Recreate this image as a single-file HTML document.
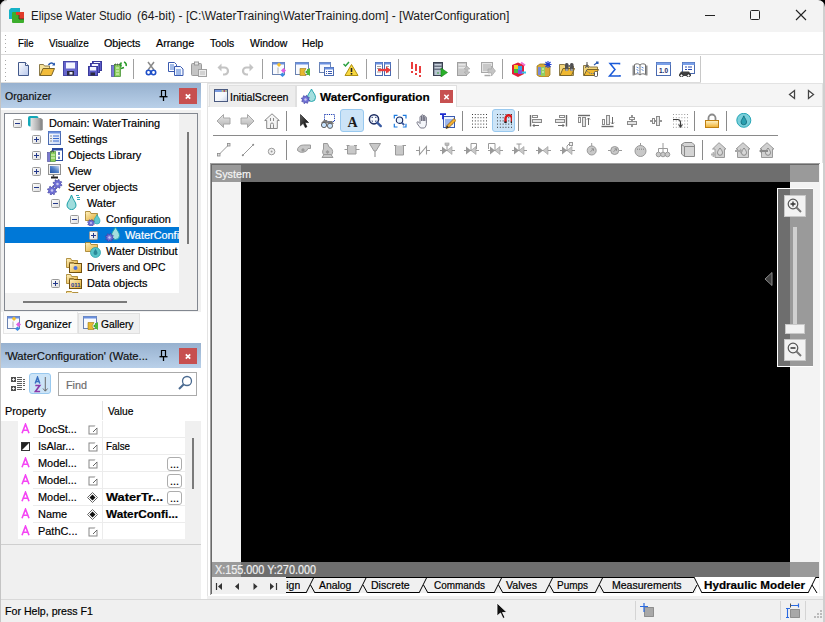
<!DOCTYPE html>
<html><head><meta charset="utf-8"><style>
html,body{margin:0;padding:0;}
body{width:825px;height:622px;position:relative;overflow:hidden;background:#f0f0f0;font-family:"Liberation Sans",sans-serif;}
body>div,body>svg,body>span{position:absolute;}
.t{white-space:pre;line-height:normal;-webkit-text-stroke:0.2px currentColor;}
</style></head><body>
<div style="left:0px;top:0px;width:825px;height:622px;background:#f0f0f0;"></div>
<div style="left:0px;top:0px;width:825px;height:32px;background:#f3f3f3;"></div>
<svg style="left:8px;top:7px" width="17" height="17" viewBox="0 0 17 17"><path d="M3 1h9v11H1V3z" fill="#16b2c6"/><rect x="4" y="5" width="12" height="11" rx="1" fill="#3cae2c"/><path d="M8 5h8v7h-5v-4H8z" fill="#e03a2a"/><path d="M11 8v4h5" fill="none" stroke="#2a2a2a" stroke-width=".7"/></svg>
<span class="t" style="left:30.5px;top:9.14px;font-size:12px;font-weight:400;color:#1a1a1a;transform:scaleX(0.9577);transform-origin:0 0;-webkit-text-stroke:0;">Elipse Water Studio</span>
<span class="t" style="left:137px;top:9.14px;font-size:12px;font-weight:400;color:#1a1a1a;transform:scaleX(1.0068);transform-origin:0 0;-webkit-text-stroke:0;">(64-bit) - [C:\WaterTraining\WaterTraining.dom] - [WaterConfiguration]</span>
<div style="left:705px;top:15px;width:10px;height:1px;background:#222;"></div>
<div style="left:750px;top:10px;width:10px;height:10px;border:1px solid #222;border-radius:1.5px;box-sizing:border-box;"></div>
<svg style="left:795px;top:9px" width="12" height="12" viewBox="0 0 12 12"><path d="M1 1l10 10M11 1L1 11" stroke="#222" stroke-width="1.1"/></svg>
<div style="left:1px;top:32px;width:822px;height:22px;background:#fff;"></div>
<div style="left:5px;top:35px;width:1px;height:1px;background:#aaa;"></div>
<div style="left:5px;top:39px;width:1px;height:1px;background:#aaa;"></div>
<div style="left:5px;top:43px;width:1px;height:1px;background:#aaa;"></div>
<div style="left:5px;top:47px;width:1px;height:1px;background:#aaa;"></div>
<div style="left:5px;top:51px;width:1px;height:1px;background:#aaa;"></div>
<span class="t" style="left:17.5px;top:37.05px;font-size:11px;font-weight:400;color:#000;transform:scaleX(0.8744);transform-origin:0 0;">File</span>
<span class="t" style="left:48.5px;top:37.05px;font-size:11px;font-weight:400;color:#000;transform:scaleX(0.9059);transform-origin:0 0;">Visualize</span>
<span class="t" style="left:103.6px;top:37.05px;font-size:11px;font-weight:400;color:#000;transform:scaleX(0.9761);transform-origin:0 0;">Objects</span>
<span class="t" style="left:155.8px;top:37.05px;font-size:11px;font-weight:400;color:#000;transform:scaleX(0.9761);transform-origin:0 0;">Arrange</span>
<span class="t" style="left:209.7px;top:37.05px;font-size:11px;font-weight:400;color:#000;transform:scaleX(0.9463);transform-origin:0 0;">Tools</span>
<span class="t" style="left:249.7px;top:37.05px;font-size:11px;font-weight:400;color:#000;transform:scaleX(0.9534);transform-origin:0 0;">Window</span>
<span class="t" style="left:302px;top:37.05px;font-size:11px;font-weight:400;color:#000;transform:scaleX(0.9415);transform-origin:0 0;">Help</span>
<div style="left:1px;top:54px;width:822px;height:1px;background:#d9d9d9;"></div>
<div style="left:1px;top:55px;width:822px;height:28px;background:#fff;"></div>
<div style="left:5px;top:60px;width:1px;height:1px;background:#aaa;"></div>
<div style="left:5px;top:64px;width:1px;height:1px;background:#aaa;"></div>
<div style="left:5px;top:68px;width:1px;height:1px;background:#aaa;"></div>
<div style="left:5px;top:72px;width:1px;height:1px;background:#aaa;"></div>
<div style="left:5px;top:76px;width:1px;height:1px;background:#aaa;"></div>
<div style="left:5px;top:80px;width:1px;height:1px;background:#aaa;"></div>
<div style="left:1px;top:82px;width:700px;height:1px;background:#dcdcdc;"></div>
<div style="left:700px;top:56px;width:1px;height:26px;background:#c8c8c8;"></div>
<svg style="left:17px;top:61px" width="16" height="16" viewBox="0 0 16 16"><defs><linearGradient id="gnew" x1="0" y1="0" x2="1" y2="1"><stop offset="0" stop-color="#ffffff"/><stop offset="1" stop-color="#b8c8ec"/></linearGradient></defs><path d="M1.5 1.5h7l3 3v10h-10z" fill="url(#gnew)" stroke="#42588a"/><path d="M8.5 1.5v3h3" fill="#fff" stroke="#42588a"/></svg>
<svg style="left:39px;top:61px" width="16" height="16" viewBox="0 0 16 16"><path d="M.5 3.5h4l1 1.5h5v9.5H.5z" fill="#f6e29a" stroke="#8c7a48"/><path d="M1 14.5l3-7h11.5l-3 7z" fill="#f2bc3a" stroke="#7a6428"/><path d="M9.5 4C11 1.5 13.5 1.5 15 3.5" fill="none" stroke="#2a5ab0" stroke-width="1.5"/><path d="M13 4.5h3v-3z" fill="#2a5ab0"/></svg>
<svg style="left:63px;top:61px" width="16" height="16" viewBox="0 0 16 16"><rect x=".5" y=".5" width="14" height="14" fill="#6666cc" stroke="#4646a6"/><rect x="3" y="1.5" width="9" height="6" fill="#f4f6ff"/><rect x="4" y="10" width="7" height="4.5" fill="#2a2a40"/><rect x="6.5" y="11" width="3" height="2.5" fill="#e8e8f8"/></svg>
<svg style="left:87px;top:61px" width="16" height="16" viewBox="0 0 16 16"><rect x="5.5" y=".5" width="9" height="9" fill="#5c5cc8" stroke="#3a3a9a"/><rect x="7" y="1" width="6" height="2" fill="#f4f6ff"/><rect x="3.5" y="2.5" width="9" height="9" fill="#5c5cc8" stroke="#3a3a9a"/><rect x="5" y="3" width="6" height="2" fill="#f4f6ff"/><rect x="1.5" y="5.5" width="9" height="9" fill="#5c5cc8" stroke="#3a3a9a"/><rect x="3" y="6" width="6" height="3.5" fill="#f4f6ff"/><rect x="3.5" y="11.5" width="4.5" height="3" fill="#2a2a40"/></svg>
<svg style="left:111px;top:61px" width="16" height="16" viewBox="0 0 16 16"><rect x=".5" y="4.5" width="3" height="11" fill="#7a7ad8" stroke="#4a4a9a" stroke-width=".7"/><rect x="3.5" y="3.5" width="6" height="12" fill="#90d060" stroke="#3a8a2a" stroke-width=".7"/><path d="M5 7h3M5 10h3M5 13h3" stroke="#e6f8d6"/><path d="M4.5 2.5v2M6.5 2.5v2M8.5 2.5v2" stroke="#555" stroke-width=".8"/><path d="M10.5 5.5a3 3 0 0 1 0-4M13 1a3 3 0 0 1 2 4" fill="none" stroke="#2a9a2a" stroke-width="1.6"/><path d="M10 7.5l3-1" stroke="#2a9a2a" stroke-width="1.4"/></svg>
<div style="left:133px;top:59px;width:1px;height:20px;background:#a0a0a0;"></div>
<svg style="left:143px;top:61px" width="16" height="16" viewBox="0 0 16 16"><path d="M5 9L11 1M11 9L5 1" stroke="#8a8a8a" stroke-width="1.5"/><circle cx="5.5" cy="11.5" r="2.2" fill="none" stroke="#2050c8" stroke-width="1.6"/><circle cx="10.5" cy="11.5" r="2.2" fill="none" stroke="#2050c8" stroke-width="1.6"/></svg>
<svg style="left:168px;top:61px" width="16" height="16" viewBox="0 0 16 16"><path d="M.5 1.5h6l2 2v7h-8z" fill="#fff" stroke="#3a5ab0"/><path d="M2 4h4M2 6h4M2 8h4" stroke="#4a7ad0"/><path d="M6.5 5.5h6l2.5 2.5v6.5h-8.5z" fill="#f4f8ff" stroke="#3a5ab0"/><path d="M8 9h5M8 11h5M8 13h5" stroke="#4a7ad0"/></svg>
<svg style="left:191px;top:61px" width="16" height="16" viewBox="0 0 16 16"><rect x=".5" y="2.5" width="10" height="12" rx="1" fill="#c4c4c4" stroke="#9a9a9a"/><rect x="3.5" y="1" width="4" height="3" fill="#e8e8e8" stroke="#9a9a9a"/><rect x="7.5" y="8.5" width="8" height="7" fill="#ececec" stroke="#a0a0a0"/><path d="M9 11h5M9 13h5" stroke="#b8b8b8"/></svg>
<svg style="left:216px;top:61px" width="16" height="16" viewBox="0 0 16 16"><path d="M4.5 6.5h4a3.5 3.5 0 0 1 0 7H7" fill="none" stroke="#c4c4c4" stroke-width="2.2"/><path d="M1.5 6.5l4-4v8z" fill="#c4c4c4"/></svg>
<svg style="left:239px;top:61px" width="16" height="16" viewBox="0 0 16 16"><path d="M11.5 6.5h-4a3.5 3.5 0 0 0 0 7H9" fill="none" stroke="#c4c4c4" stroke-width="2.2"/><path d="M14.5 6.5l-4-4v8z" fill="#c4c4c4"/></svg>
<div style="left:262px;top:59px;width:1px;height:20px;background:#a0a0a0;"></div>
<svg style="left:271px;top:61px" width="16" height="16" viewBox="0 0 16 16"><rect x="1.5" y="1.5" width="12" height="12" fill="#f8faff" stroke="#6a82b0"/><rect x="1.5" y="1.5" width="12" height="2" fill="#6a90e0"/><path d="M7 6.5v6" stroke="#b0b0b0"/><path d="M8 1.5l2.3 2.3L8 6.1 5.7 3.8z" fill="#f4c030"/><path d="M12.5 7l2.5 2.5-2.5 2.5L10 9.5z" fill="#e060e0"/><path d="M11.5 11.5l2.5 2.2-2.5 2.2L9 13.7z" fill="#3a8ae0"/></svg>
<svg style="left:295px;top:61px" width="16" height="16" viewBox="0 0 16 16"><rect x=".5" y="1.5" width="13" height="12" fill="#f8faff" stroke="#6a82b0"/><rect x=".5" y="1.5" width="13" height="2" fill="#6a90e0"/><path d="M5 7.5h6l-2 3.5 2 3.5H5z" fill="#e8b830" stroke="#a07a10" stroke-width=".6"/><path d="M15 7v8l-5-4z" fill="#3aa02a"/><rect x="12" y="8" width="3" height="6" fill="#50b83a"/></svg>
<svg style="left:319px;top:61px" width="16" height="16" viewBox="0 0 16 16"><rect x=".5" y="1.5" width="11" height="10" fill="#f8faff" stroke="#6a82b0"/><rect x=".5" y="1.5" width="11" height="2" fill="#6a90e0"/><rect x="5.5" y="6.5" width="9" height="8" fill="#fff" stroke="#4a6ab0"/><rect x="5.5" y="6.5" width="9" height="2" fill="#6a90e0"/><path d="M7 10.5h1M7 12.5h1M9 10.5h4M9 12.5h4" stroke="#3a5ab0"/></svg>
<svg style="left:343px;top:61px" width="16" height="16" viewBox="0 0 16 16"><path d="M8.5 3.5l6.5 11H2z" fill="#f8d840" stroke="#b09010" stroke-linejoin="round"/><path d="M8.5 7v4" stroke="#222" stroke-width="1.6"/><path d="M8.5 12v1.6" stroke="#222" stroke-width="1.6"/><path d="M.5 3l2 2 3.5-4" fill="none" stroke="#2aa040" stroke-width="1.5"/></svg>
<div style="left:366px;top:59px;width:1px;height:20px;background:#a0a0a0;"></div>
<svg style="left:375px;top:61px" width="16" height="16" viewBox="0 0 16 16"><rect x=".5" y="1.5" width="7" height="13" fill="#fff" stroke="#4a6ab0"/><rect x=".5" y="1.5" width="7" height="2" fill="#6a90e0"/><rect x="9.5" y="1.5" width="6" height="13" fill="#fff" stroke="#4a6ab0"/><rect x="9.5" y="1.5" width="6" height="2" fill="#6a90e0"/><path d="M2 5.5h4M2 7.5h4M2 11h4M11 5.5h3M11 11h3" stroke="#a0a0a0"/><path d="M3 9h8" stroke="#e83a3a" stroke-width="2.4"/><path d="M11 5.5l5 3.5-5 3.5z" fill="#e83a3a"/></svg>
<div style="left:398px;top:59px;width:1px;height:20px;background:#a0a0a0;"></div>
<svg style="left:408px;top:61px" width="16" height="16" viewBox="0 0 16 16"><path d="M4 1v7M8 3v7M12 5v7" stroke="#e82828" stroke-width="1.8"/><path d="M4 10v2M8 12v2M12 14v2" stroke="#e82828" stroke-width="1.8"/></svg>
<svg style="left:432px;top:61px" width="16" height="16" viewBox="0 0 16 16"><rect x="1.5" y="1.5" width="9" height="13" fill="#6a7282" stroke="#3a4050"/><rect x="2.5" y="3" width="7" height="1.5" fill="#c8d0dc"/><rect x="2.5" y="6" width="7" height="1.5" fill="#c8d0dc"/><rect x="2.5" y="9" width="7" height="5" fill="#b8c4d0"/><circle cx="6" cy="12" r=".8" fill="#2a9a2a"/><path d="M9 7l6.5 4.5L9 16z" fill="#28b028" stroke="#1a801a" stroke-width=".6"/></svg>
<svg style="left:456px;top:61px" width="16" height="16" viewBox="0 0 16 16"><rect x="1.5" y="1.5" width="9" height="13" fill="#c8c8c8" stroke="#a0a0a0"/><rect x="2.5" y="3" width="7" height="1.5" fill="#e8e8e8"/><rect x="2.5" y="6" width="7" height="1.5" fill="#e8e8e8"/><path d="M11 5l3 3h-2v3h2l-3 3-3-3h2V8H8z" fill="#c0c0c0" stroke="#a8a8a8" stroke-width=".6"/></svg>
<svg style="left:480px;top:61px" width="16" height="16" viewBox="0 0 16 16"><rect x="1.5" y="1.5" width="11" height="10" fill="#e4e4e4" stroke="#a8a8a8"/><rect x="3" y="3" width="8" height="7" fill="#c8c8c8"/><path d="M4.5 14.5h6" stroke="#a8a8a8" stroke-width="1.5"/><path d="M8 8h3.5V5l4 5-4 5v-3H8z" fill="#c4c4c4" stroke="#a0a0a0" stroke-width=".6"/></svg>
<div style="left:502px;top:59px;width:1px;height:20px;background:#a0a0a0;"></div>
<svg style="left:511px;top:61px" width="16" height="16" viewBox="0 0 16 16"><path d="M1 4l6-2.5 6 2.5v9l-6 3-6-3z" fill="#e02038"/><rect x="3" y="4" width="4" height="4" fill="#f0d020"/><rect x="7" y="5" width="4" height="4" fill="#30a8e8"/><rect x="3" y="8" width="4" height="4" fill="#40c040"/><rect x="7" y="9" width="4" height="4" fill="#8050e0"/><path d="M10 1.5l4 3" stroke="#f070d0" stroke-width="2"/><path d="M11 11.5h4" stroke="#30c8e8" stroke-width="2"/></svg>
<svg style="left:536px;top:61px" width="16" height="16" viewBox="0 0 16 16"><path d="M1 5l3-2h8l2 2v9l-2 2H4l-3-2z" fill="#d8a838" stroke="#8a6a10" stroke-width=".7"/><rect x="2" y="6" width="3" height="8" fill="#7a8ad8"/><rect x="5" y="6" width="4" height="9" fill="#90d060"/><path d="M6 8h2M6 11h2" stroke="#e8f8d8"/><path d="M9.5 1l5 5M14.5 1l-5 5M12 0v7M8.5 3.5h7" stroke="#1a3ad0" stroke-width="1.1"/></svg>
<svg style="left:559px;top:61px" width="16" height="16" viewBox="0 0 16 16"><path d="M.5 3.5h5l1 1.5h8v9.5H.5z" fill="#f4d67a" stroke="#8c7a48"/><path d="M1 14.5l3-7h11.5l-3 7z" fill="#f0b830" stroke="#7a6428"/><rect x="6" y="2" width="3.5" height="8" rx="1.5" fill="#505050"/><rect x="11" y="2" width="3.5" height="8" rx="1.5" fill="#505050"/><rect x="9" y="4" width="2.5" height="2" fill="#707070"/><circle cx="7.7" cy="9" r="1.3" fill="#a0a0a0"/><circle cx="12.7" cy="9" r="1.3" fill="#a0a0a0"/></svg>
<svg style="left:583px;top:61px" width="16" height="16" viewBox="0 0 16 16"><path d="M.5 4.5h5l1 1.5h8v8.5H.5z" fill="#f4d67a" stroke="#8c7a48"/><path d="M1 14.5l3-6h11.5l-3 6z" fill="#f0b830" stroke="#7a6428"/><path d="M4 1v5M2.5 7l1.5-4 1.5 4" fill="none" stroke="#606060" stroke-width="1.1"/><path d="M3 9q4 5 9 3" fill="none" stroke="#2a5ab0" stroke-dasharray="1 1"/><path d="M11 4l4-3M13 1h2v2" stroke="#2a5ab0" stroke-width="1.1" fill="none"/><rect x="11.5" y="10.5" width="3" height="5" rx="1" fill="#fff" stroke="#555"/></svg>
<svg style="left:607px;top:61px" width="16" height="16" viewBox="0 0 16 16"><path d="M12.5 3.5V2.5H3l5 6-5.5 6.5h10.5V14" fill="none" stroke="#1a5ad8" stroke-width="1.5" stroke-linejoin="miter"/></svg>
<svg style="left:632px;top:61px" width="16" height="16" viewBox="0 0 16 16"><path d="M.5 4.5h2v10h-2zM13.5 4.5h2v10h-2z" fill="#909090"/><path d="M2.5 3.5c2-1 4-1 5.5.5 1.5-1.5 3.5-1.5 5.5-.5v10c-2-1-4-1-5.5.5-1.5-1.5-3.5-1.5-5.5-.5z" fill="#fff" stroke="#707070"/><path d="M8 4v10" stroke="#707070"/><path d="M4.5 6l2 1M4.5 8.5l2 1M9.5 6l2 1M9.5 8.5l2 1M5 11l1.5 1" stroke="#5a8ad8"/></svg>
<svg style="left:656px;top:61px" width="16" height="16" viewBox="0 0 16 16"><rect x=".5" y="1.5" width="14" height="13" fill="#fff" stroke="#4a6ab0"/><rect x=".5" y="1.5" width="14" height="2.5" fill="#7aa0e8"/><text x="7.5" y="12.3" font-size="6.5" font-family="Liberation Sans" font-weight="700" text-anchor="middle" fill="#1a2a6a">1.0</text></svg>
<svg style="left:679px;top:61px" width="16" height="16" viewBox="0 0 16 16"><rect x="3.5" y="1.5" width="12" height="11" fill="#fff" stroke="#4a6ab0"/><rect x="3.5" y="1.5" width="12" height="2.5" fill="#7aa0e8"/><path d="M6 6h2M9 6h4M6 8.5h2M9 8.5h4" stroke="#2a4ab0"/><path d="M0 13.5l2-3h8l2 3v1.5H0z" fill="#404040"/><circle cx="2.5" cy="14.5" r="1.6" fill="#fff" stroke="#222"/><circle cx="9.5" cy="14.5" r="1.6" fill="#fff" stroke="#222"/></svg>
<div style="left:0px;top:83px;width:207px;height:516px;background:#fff;"></div>
<div style="left:1px;top:83px;width:200px;height:25px;background:linear-gradient(#97b1cf,#b9d0e9);"></div>
<span class="t" style="left:5px;top:89.59px;font-size:11.5px;font-weight:400;color:#111;transform:scaleX(0.9169);transform-origin:0 0;">Organizer</span>
<svg style="left:159px;top:90px" width="10" height="12" viewBox="0 0 10 12"><path d="M2.5 .5h4v6h-4z" fill="none" stroke="#000" stroke-width="1.2"/><path d="M.5 6.7h8" stroke="#000" stroke-width="1.3"/><path d="M4.5 7v4" stroke="#000" stroke-width="1.3"/></svg>
<div style="left:179px;top:88px;width:18px;height:16px;background:#c75050;"></div>
<svg style="left:182px;top:90px" width="12" height="12" viewBox="0 0 12 12"><path d="M3.8 4.3l4.4 4.4M8.2 4.3l-4.4 4.4" stroke="#fff" stroke-width="1.7"/></svg>
<div style="left:1px;top:110px;width:200px;height:202px;background:#f0f0f0;"></div>
<div style="left:4px;top:113px;width:194px;height:198px;background:#f0f0f0;border:1px solid #828790;box-sizing:border-box;"></div>
<div style="left:5px;top:114px;width:174px;height:179px;background:#fff;"></div>
<div style="left:187px;top:132px;width:2px;height:112px;background:#7a7a7a;"></div>
<div style="left:23px;top:301px;width:104px;height:2px;background:#7a7a7a;"></div>
<svg style="left:13px;top:119px" width="9" height="9" viewBox="0 0 9 9"><defs><linearGradient id="eg" x1="0" y1="0" x2="1" y2="1"><stop offset="0" stop-color="#fff"/><stop offset="1" stop-color="#dcdcdc"/></linearGradient></defs><rect x=".5" y=".5" width="8" height="8" rx="1" fill="url(#eg)" stroke="#9a9a9a"/><path d="M2 4.5h5" stroke="#23388a"/></svg>
<svg style="left:28px;top:115px" width="16" height="16" viewBox="0 0 16 16"><defs><linearGradient id="dg" x1="0" x2="1"><stop offset="0" stop-color="#e6e6e6"/><stop offset=".6" stop-color="#b0b0b0"/><stop offset="1" stop-color="#808080"/></linearGradient></defs><rect x="0" y="1" width="10.5" height="10.5" rx="2" fill="#14a8b8"/><path d="M2.5 3h10l2 1.5V15l-2 .5h-10z" fill="url(#dg)"/><path d="M12.5 3l2 1.5V15l-2 .5z" fill="#8a8a8a"/></svg>
<span class="t" style="left:48.7px;top:117.05px;font-size:11px;font-weight:400;color:#000;transform:scaleX(0.9900);transform-origin:0 0;">Domain: WaterTraining</span>
<svg style="left:32px;top:135px" width="9" height="9" viewBox="0 0 9 9"><defs><linearGradient id="eg" x1="0" y1="0" x2="1" y2="1"><stop offset="0" stop-color="#fff"/><stop offset="1" stop-color="#dcdcdc"/></linearGradient></defs><rect x=".5" y=".5" width="8" height="8" rx="1" fill="url(#eg)" stroke="#9a9a9a"/><path d="M2 4.5h5" stroke="#23388a"/><path d="M4.5 2v5" stroke="#23388a"/></svg>
<svg style="left:47px;top:131px" width="16" height="16" viewBox="0 0 16 16"><defs><linearGradient id="sg" x1="0" y1="0" x2="1" y2="1"><stop offset="0" stop-color="#ffffff"/><stop offset="1" stop-color="#c8d8f4"/></linearGradient></defs><rect x="1.5" y=".5" width="12" height="13" fill="url(#sg)" stroke="#4a6ab0"/><rect x="1.5" y=".5" width="12" height="2" fill="#6a90e0"/><path d="M3 5h2M3 7.5h2M3 10h2" stroke="#909090" stroke-width="1.2"/><path d="M6 5h6M6 7.5h6M6 10h6" stroke="#3a6ad0" stroke-width="1.2"/></svg>
<span class="t" style="left:67.7px;top:133.04px;font-size:11px;font-weight:400;color:#000;transform:scaleX(0.9900);transform-origin:0 0;">Settings</span>
<svg style="left:32px;top:151px" width="9" height="9" viewBox="0 0 9 9"><defs><linearGradient id="eg" x1="0" y1="0" x2="1" y2="1"><stop offset="0" stop-color="#fff"/><stop offset="1" stop-color="#dcdcdc"/></linearGradient></defs><rect x=".5" y=".5" width="8" height="8" rx="1" fill="url(#eg)" stroke="#9a9a9a"/><path d="M2 4.5h5" stroke="#23388a"/><path d="M4.5 2v5" stroke="#23388a"/></svg>
<svg style="left:47px;top:147px" width="16" height="16" viewBox="0 0 16 16"><rect x="5.5" y="1.5" width="10" height="12" fill="#fff" stroke="#2a4aa0"/><rect x="5.5" y="1.5" width="10" height="2" fill="#2a4aa0"/><path d="M12 5v3M12 9.5v2.5" stroke="#2a4aa0" stroke-width="1.4"/><rect x="0.5" y="5.5" width="3" height="9" fill="#7a7ad0" stroke="#4a4a9a" stroke-width=".6"/><rect x="3.5" y="4.5" width="5" height="10" fill="#8cd05a" stroke="#3a8a2a" stroke-width=".6"/><path d="M4.5 3.5v2M6.5 3.5v2" stroke="#555"/><path d="M4 8h4M4 11h4" stroke="#e8f8d0"/></svg>
<span class="t" style="left:67.7px;top:149.04px;font-size:11px;font-weight:400;color:#000;transform:scaleX(0.9900);transform-origin:0 0;">Objects Library</span>
<svg style="left:32px;top:167px" width="9" height="9" viewBox="0 0 9 9"><defs><linearGradient id="eg" x1="0" y1="0" x2="1" y2="1"><stop offset="0" stop-color="#fff"/><stop offset="1" stop-color="#dcdcdc"/></linearGradient></defs><rect x=".5" y=".5" width="8" height="8" rx="1" fill="url(#eg)" stroke="#9a9a9a"/><path d="M2 4.5h5" stroke="#23388a"/><path d="M4.5 2v5" stroke="#23388a"/></svg>
<svg style="left:47px;top:163px" width="16" height="16" viewBox="0 0 16 16"><rect x="1.5" y="1.5" width="12" height="10" fill="#f0f0f0" stroke="#909090"/><defs><linearGradient id="vg" x1="0" y1="1" x2="1" y2="0"><stop offset="0" stop-color="#2050a0"/><stop offset=".5" stop-color="#5080c8"/><stop offset="1" stop-color="#c8d8f0"/></linearGradient></defs><rect x="3" y="3" width="9" height="7" fill="url(#vg)"/><path d="M4 14.5h7" stroke="#222" stroke-width="2"/><path d="M6.5 12v2" stroke="#555" stroke-width="1.5"/></svg>
<span class="t" style="left:67.7px;top:165.04px;font-size:11px;font-weight:400;color:#000;transform:scaleX(0.9900);transform-origin:0 0;">View</span>
<svg style="left:32px;top:183px" width="9" height="9" viewBox="0 0 9 9"><defs><linearGradient id="eg" x1="0" y1="0" x2="1" y2="1"><stop offset="0" stop-color="#fff"/><stop offset="1" stop-color="#dcdcdc"/></linearGradient></defs><rect x=".5" y=".5" width="8" height="8" rx="1" fill="url(#eg)" stroke="#9a9a9a"/><path d="M2 4.5h5" stroke="#23388a"/></svg>
<svg style="left:47px;top:179px" width="16" height="16" viewBox="0 0 16 16"><polygon points="10.50,1.80 11.40,0.49 12.26,0.75 12.28,2.34 12.76,2.74 14.32,2.44 14.75,3.24 13.64,4.38 13.70,5.00 15.01,5.90 14.75,6.76 13.16,6.78 12.76,7.26 13.06,8.82 12.26,9.25 11.12,8.14 10.50,8.20 9.60,9.51 8.74,9.25 8.72,7.66 8.24,7.26 6.68,7.56 6.25,6.76 7.36,5.62 7.30,5.00 5.99,4.10 6.25,3.24 7.84,3.22 8.24,2.74 7.94,1.18 8.74,0.75 9.88,1.86" fill="#6f6fd6" stroke="#3a3a9a" stroke-width=".6"/><circle cx="10.5" cy="5" r="1.28" fill="#c8c8f0"/><polygon points="5.00,8.30 5.90,6.99 6.76,7.25 6.78,8.84 7.26,9.24 8.82,8.94 9.25,9.74 8.14,10.88 8.20,11.50 9.51,12.40 9.25,13.26 7.66,13.28 7.26,13.76 7.56,15.32 6.76,15.75 5.62,14.64 5.00,14.70 4.10,16.01 3.24,15.75 3.22,14.16 2.74,13.76 1.18,14.06 0.75,13.26 1.86,12.12 1.80,11.50 0.49,10.60 0.75,9.74 2.34,9.72 2.74,9.24 2.44,7.68 3.24,7.25 4.38,8.36" fill="#6f6fd6" stroke="#3a3a9a" stroke-width=".6"/><circle cx="5" cy="11.5" r="1.28" fill="#c8c8f0"/></svg>
<span class="t" style="left:67.7px;top:181.04px;font-size:11px;font-weight:400;color:#000;transform:scaleX(0.9900);transform-origin:0 0;">Server objects</span>
<svg style="left:51px;top:199px" width="9" height="9" viewBox="0 0 9 9"><defs><linearGradient id="eg" x1="0" y1="0" x2="1" y2="1"><stop offset="0" stop-color="#fff"/><stop offset="1" stop-color="#dcdcdc"/></linearGradient></defs><rect x=".5" y=".5" width="8" height="8" rx="1" fill="url(#eg)" stroke="#9a9a9a"/><path d="M2 4.5h5" stroke="#23388a"/></svg>
<svg style="left:66px;top:194px" width="16" height="16" viewBox="0 0 16 16"><path d="M5.5 1C7.0 5.8999999999999995 10.0 8.0 10.0 11.08A4.5 4.5 0 0 1 1.0 11.08C1.0 8.0 4.0 5.8999999999999995 5.5 1z" fill="#9fdcdc" stroke="#1aa0a8" stroke-width="1"/><path d="M10 1.5h3M11 3.5h3M11 5.5h3" stroke="#30a8b8" stroke-width="1"/></svg>
<span class="t" style="left:86.7px;top:197.04px;font-size:11px;font-weight:400;color:#000;transform:scaleX(0.9900);transform-origin:0 0;">Water</span>
<svg style="left:70px;top:215px" width="9" height="9" viewBox="0 0 9 9"><defs><linearGradient id="eg" x1="0" y1="0" x2="1" y2="1"><stop offset="0" stop-color="#fff"/><stop offset="1" stop-color="#dcdcdc"/></linearGradient></defs><rect x=".5" y=".5" width="8" height="8" rx="1" fill="url(#eg)" stroke="#9a9a9a"/><path d="M2 4.5h5" stroke="#23388a"/></svg>
<svg style="left:85px;top:210px" width="16" height="16" viewBox="0 0 16 16"><defs><linearGradient id="fg" x1="0" y1="0" x2="1" y2="1"><stop offset="0" stop-color="#fff2c0"/><stop offset="1" stop-color="#e0a830"/></linearGradient></defs><path d="M0.5 3.5V1.5h4.55l1 2H12.5V10.5H0.5z" fill="url(#fg)" stroke="#a07a20" stroke-width=".8"/><path d="M12 4.5C13 7 15 8.5 15 11a3 3 0 0 1 -6 0C9 8.5 11 7 12 4.5z" fill="#60c8d0" stroke="#1aa0a8" stroke-width=".6"/><polygon points="6.00,10.60 6.68,9.57 7.34,9.77 7.33,11.00 7.70,11.30 8.91,11.06 9.23,11.66 8.35,12.53 8.40,13.00 9.43,13.68 9.23,14.34 8.00,14.33 7.70,14.70 7.94,15.91 7.34,16.23 6.47,15.35 6.00,15.40 5.32,16.43 4.66,16.23 4.67,15.00 4.30,14.70 3.09,14.94 2.77,14.34 3.65,13.47 3.60,13.00 2.57,12.32 2.77,11.66 4.00,11.67 4.30,11.30 4.06,10.09 4.66,9.77 5.53,10.65" fill="#6f6fd6" stroke="#3a3a9a" stroke-width=".6"/><circle cx="6" cy="13" r="0.96" fill="#c8c8f0"/></svg>
<span class="t" style="left:105.7px;top:213.04px;font-size:11px;font-weight:400;color:#000;transform:scaleX(0.9900);transform-origin:0 0;">Configuration</span>
<div style="left:5px;top:227px;width:174px;height:16px;background:#0078d7;"></div>
<svg style="left:89px;top:231px" width="9" height="9" viewBox="0 0 9 9"><defs><linearGradient id="eg" x1="0" y1="0" x2="1" y2="1"><stop offset="0" stop-color="#fff"/><stop offset="1" stop-color="#dcdcdc"/></linearGradient></defs><rect x=".5" y=".5" width="8" height="8" rx="1" fill="url(#eg)" stroke="#9a9a9a"/><path d="M2 4.5h5" stroke="#23388a"/><path d="M4.5 2v5" stroke="#23388a"/></svg>
<svg style="left:104px;top:226px" width="16" height="16" viewBox="0 0 16 16"><path d="M11.5 1C12.5 4 15.5 6 15.5 9.5a4 4 0 0 1 -8 0C7.5 6 10.5 4 11.5 1z" fill="#a4dede" stroke="#1aa0a8" stroke-width=".9"/><polygon points="5.50,8.50 6.32,7.38 7.11,7.62 7.17,9.01 7.62,9.38 8.99,9.17 9.38,9.89 8.44,10.91 8.50,11.50 9.62,12.32 9.38,13.11 7.99,13.17 7.62,13.62 7.83,14.99 7.11,15.38 6.09,14.44 5.50,14.50 4.68,15.62 3.89,15.38 3.83,13.99 3.38,13.62 2.01,13.83 1.62,13.11 2.56,12.09 2.50,11.50 1.38,10.68 1.62,9.89 3.01,9.83 3.38,9.38 3.17,8.01 3.89,7.62 4.91,8.56" fill="#6f6fd6" stroke="#3a3a9a" stroke-width=".6"/><circle cx="5.5" cy="11.5" r="1.20" fill="#c8c8f0"/></svg>
<span class="t" style="left:124.7px;top:229.04px;font-size:11px;font-weight:400;color:#fff;transform:scaleX(0.9900);transform-origin:0 0;">WaterConfi</span>
<svg style="left:85px;top:242px" width="16" height="16" viewBox="0 0 16 16"><defs><linearGradient id="fg" x1="0" y1="0" x2="1" y2="1"><stop offset="0" stop-color="#fff2c0"/><stop offset="1" stop-color="#e0a830"/></linearGradient></defs><path d="M0.5 2.5V0.5h4.55l1 2H12.5V9.5H0.5z" fill="url(#fg)" stroke="#a07a20" stroke-width=".8"/><circle cx="10.5" cy="10.5" r="5" fill="#58c4c8" stroke="#1a9aa8" stroke-width=".7"/><path d="M10.5 6.5C11 8 12.5 9.5 12.5 11a2 2 0 0 1 -4 0C8.5 9.5 10 8 10.5 6.5z" fill="#2a8a98"/></svg>
<span class="t" style="left:105.7px;top:245.04px;font-size:11px;font-weight:400;color:#000;transform:scaleX(0.9900);transform-origin:0 0;">Water Distribut</span>
<svg style="left:66px;top:258px" width="16" height="16" viewBox="0 0 16 16"><defs><linearGradient id="fg" x1="0" y1="0" x2="1" y2="1"><stop offset="0" stop-color="#fff2c0"/><stop offset="1" stop-color="#e0a830"/></linearGradient></defs><path d="M0.5 2.5V0.5h4.199999999999999l1 2H11.5V9.5H0.5z" fill="url(#fg)" stroke="#a07a20" stroke-width=".8"/><rect x="3.5" y="5.5" width="12" height="9" fill="url(#fg)" stroke="#705010"/><path d="M3.5 5.5V4.5h4l1 1" fill="#fbe39a" stroke="#705010" stroke-width=".7"/><circle cx="9.5" cy="10" r="2" fill="#4a70e0"/></svg>
<span class="t" style="left:86.7px;top:261.05px;font-size:11px;font-weight:400;color:#000;transform:scaleX(0.9450);transform-origin:0 0;">Drivers and OPC</span>
<svg style="left:51px;top:279px" width="9" height="9" viewBox="0 0 9 9"><defs><linearGradient id="eg" x1="0" y1="0" x2="1" y2="1"><stop offset="0" stop-color="#fff"/><stop offset="1" stop-color="#dcdcdc"/></linearGradient></defs><rect x=".5" y=".5" width="8" height="8" rx="1" fill="url(#eg)" stroke="#9a9a9a"/><path d="M2 4.5h5" stroke="#23388a"/><path d="M4.5 2v5" stroke="#23388a"/></svg>
<svg style="left:66px;top:274px" width="16" height="16" viewBox="0 0 16 16"><defs><linearGradient id="fg" x1="0" y1="0" x2="1" y2="1"><stop offset="0" stop-color="#fff2c0"/><stop offset="1" stop-color="#e0a830"/></linearGradient></defs><path d="M0.5 2.5V0.5h4.199999999999999l1 2H11.5V9.5H0.5z" fill="url(#fg)" stroke="#a07a20" stroke-width=".8"/><rect x="3.5" y="5.5" width="12" height="9" fill="url(#fg)" stroke="#705010"/><path d="M3.5 5.5V4.5h4l1 1" fill="#fbe39a" stroke="#705010" stroke-width=".7"/><text x="9.7" y="13.3" font-size="5.8" font-family="Liberation Sans" font-weight="700" text-anchor="middle" fill="#1a3aa0">011</text></svg>
<span class="t" style="left:86.7px;top:277.05px;font-size:11px;font-weight:400;color:#000;transform:scaleX(0.9900);transform-origin:0 0;">Data objects</span>
<div style="left:179px;top:114px;width:18px;height:179px;background:#f0f0f0;"></div>
<div style="left:187px;top:132px;width:2px;height:112px;background:#7a7a7a;"></div>
<svg style="left:66px;top:290px" width="16" height="3" viewBox="0 0 16 3"><path d="M.5 3V1.5h5l1 1H12V3" fill="#fbe39a" stroke="#a07a20" stroke-width=".8"/></svg>
<div style="left:5px;top:293px;width:174px;height:17px;background:#f0f0f0;"></div>
<div style="left:23px;top:301px;width:104px;height:2px;background:#7a7a7a;"></div>
<div style="left:3px;top:312px;width:75px;height:22px;background:#fbfbfb;border:1px solid #e6e6e6;border-top:none;box-sizing:border-box;"></div>
<div style="left:78px;top:313px;width:62px;height:21px;background:#f0f0f0;border:1px solid #e0e0e0;box-sizing:border-box;"></div>
<svg style="left:6px;top:315px" width="16" height="16" viewBox="0 0 16 16"><rect x="1.5" y="1.5" width="12" height="12" fill="#f8faff" stroke="#6a82b0"/><rect x="1.5" y="1.5" width="12" height="2" fill="#6a90e0"/><path d="M7 6.5v6" stroke="#b0b0b0"/><path d="M8 1.5l2.3 2.3L8 6.1 5.7 3.8z" fill="#f4c030"/><path d="M12.5 7l2.5 2.5-2.5 2.5L10 9.5z" fill="#e060e0"/><path d="M11.5 11.5l2.5 2.2-2.5 2.2L9 13.7z" fill="#3a8ae0"/></svg>
<span class="t" style="left:24.5px;top:317.59px;font-size:11.5px;font-weight:400;color:#000;transform:scaleX(0.9209);transform-origin:0 0;">Organizer</span>
<svg style="left:83px;top:315px" width="16" height="16" viewBox="0 0 16 16"><rect x=".5" y="1.5" width="13" height="12" fill="#f8faff" stroke="#6a82b0"/><rect x=".5" y="1.5" width="13" height="2" fill="#6a90e0"/><path d="M5 7.5h6l-2 3.5 2 3.5H5z" fill="#e8b830" stroke="#a07a10" stroke-width=".6"/><path d="M15 7v8l-5-4z" fill="#3aa02a"/><rect x="12" y="8" width="3" height="6" fill="#50b83a"/></svg>
<span class="t" style="left:100.5px;top:317.59px;font-size:11.5px;font-weight:400;color:#000;transform:scaleX(0.8922);transform-origin:0 0;">Gallery</span>
<div style="left:1px;top:343px;width:200px;height:25px;background:linear-gradient(#97b1cf,#b9d0e9);"></div>
<span class="t" style="left:5px;top:349.59px;font-size:11.5px;font-weight:400;color:#111;transform:scaleX(0.9790);transform-origin:0 0;">'WaterConfiguration' (Wate...</span>
<svg style="left:159px;top:350px" width="10" height="12" viewBox="0 0 10 12"><path d="M2.5 .5h4v6h-4z" fill="none" stroke="#000" stroke-width="1.2"/><path d="M.5 6.7h8" stroke="#000" stroke-width="1.3"/><path d="M4.5 7v4" stroke="#000" stroke-width="1.3"/></svg>
<div style="left:179px;top:348px;width:18px;height:16px;background:#c75050;"></div>
<svg style="left:182px;top:350px" width="12" height="12" viewBox="0 0 12 12"><path d="M3.8 4.3l4.4 4.4M8.2 4.3l-4.4 4.4" stroke="#fff" stroke-width="1.7"/></svg>
<div style="left:1px;top:368px;width:200px;height:30px;background:#fff;"></div>
<svg style="left:11px;top:377px" width="15" height="15" viewBox="0 0 15 15"><rect x="0" y="0" width="5" height="5" fill="#505050"/><path d="M1.2 2.5h2.6M2.5 1.2v2.6" stroke="#fff" stroke-width="1"/><rect x="0" y="9" width="5" height="5" fill="#505050"/><path d="M1.2 11.5h2.6M2.5 10.2v2.6" stroke="#fff" stroke-width="1"/><path d="M6 .5h5M6 2.5h5M6 4.5h5M6 6.5h5M6 8.5h5M6 10.5h5M6 12.5h5" stroke="#606060"/><path d="M12 2.5h2M12 4.5h2M12 6.5h2M12 8.5h2M12 12.5h2" stroke="#606060"/></svg>
<div style="left:29px;top:373px;width:22px;height:21px;background:#cce4f7;border:1px solid #99c9ef;border-radius:3px;box-sizing:border-box;"></div>
<svg style="left:34px;top:376px" width="16" height="17" viewBox="0 0 16 17"><path d="M1.2 7.5L3.5 1.2 5.8 7.5M2 5.5h3" fill="none" stroke="#3a70c0" stroke-width="1.5"/><path d="M1.3 9.5h4.5L1.3 15.5h4.8" fill="none" stroke="#8a3aa8" stroke-width="1.6"/><path d="M11.3 1v14M9 12.5l2.3 2.7 2.3-2.7" fill="none" stroke="#6a6a6a" stroke-width="1"/></svg>
<div style="left:58px;top:372px;width:139px;height:24px;background:#fff;border:1px solid #aaa;box-sizing:border-box;"></div>
<span class="t" style="left:66px;top:378.59px;font-size:11.5px;font-weight:400;color:#6d6d6d;transform:scaleX(0.9387);transform-origin:0 0;">Find</span>
<svg style="left:177px;top:375px" width="16" height="16" viewBox="0 0 16 16"><circle cx="10" cy="6" r="4.5" fill="none" stroke="#4a6a90" stroke-width="1.3"/><path d="M6.8 9.2L2 14" stroke="#4a6a90" stroke-width="2"/></svg>
<div style="left:1px;top:398px;width:200px;height:23px;background:#fff;"></div>
<span class="t" style="left:5px;top:404.59px;font-size:11.5px;font-weight:400;color:#000;transform:scaleX(0.9433);transform-origin:0 0;">Property</span>
<div style="left:102px;top:401px;width:1px;height:19px;background:#e3e3e3;"></div>
<span class="t" style="left:107.5px;top:404.59px;font-size:11.5px;font-weight:400;color:#000;transform:scaleX(0.8928);transform-origin:0 0;">Value</span>
<div style="left:1px;top:421px;width:200px;height:123px;background:#f0f0f0;"></div>
<div style="left:18px;top:421px;width:167px;height:118px;background:#fff;"></div>
<svg style="left:20px;top:423px" width="11" height="11" viewBox="0 0 11 11"><path d="M2 10.3L5.5 1.2 9 10.3M3.3 7.3h4.4" fill="none" stroke="#f445f4" stroke-width="1.6"/></svg>
<span class="t" style="left:37.5px;top:422.89px;font-size:11.5px;font-weight:400;color:#000;transform:scaleX(0.9500);transform-origin:0 0;">DocSt...</span>
<svg style="left:88px;top:425px" width="10" height="10" viewBox="0 0 10 10"><path d="M.5 .5h7l-1 1H1.5v7h7v-5l1-1v7H.5z" fill="#888"/><path d="M5 7l4-4" stroke="#666"/></svg>
<div style="left:102px;top:421px;width:1px;height:16px;background:#ececec;"></div>
<div style="left:33px;top:437px;width:152px;height:1px;background:#ececec;"></div>
<svg style="left:21px;top:442px" width="9" height="9" viewBox="0 0 9 9"><rect x=".5" y=".5" width="8" height="8" fill="#fff" stroke="#333"/><path d="M1 8V1h7z" fill="#222"/></svg>
<span class="t" style="left:37.5px;top:439.89px;font-size:11.5px;font-weight:400;color:#000;transform:scaleX(0.9500);transform-origin:0 0;">IsAlar...</span>
<svg style="left:88px;top:442px" width="10" height="10" viewBox="0 0 10 10"><path d="M.5 .5h7l-1 1H1.5v7h7v-5l1-1v7H.5z" fill="#888"/><path d="M5 7l4-4" stroke="#666"/></svg>
<div style="left:102px;top:438px;width:1px;height:16px;background:#ececec;"></div>
<span class="t" style="left:105.5px;top:439.89px;font-size:11.5px;font-weight:400;color:#000;transform:scaleX(0.8534);transform-origin:0 0;">False</span>
<div style="left:33px;top:454px;width:152px;height:1px;background:#ececec;"></div>
<svg style="left:20px;top:457px" width="11" height="11" viewBox="0 0 11 11"><path d="M2 10.3L5.5 1.2 9 10.3M3.3 7.3h4.4" fill="none" stroke="#f445f4" stroke-width="1.6"/></svg>
<span class="t" style="left:37.5px;top:456.89px;font-size:11.5px;font-weight:400;color:#000;transform:scaleX(0.9500);transform-origin:0 0;">Model...</span>
<svg style="left:88px;top:459px" width="10" height="10" viewBox="0 0 10 10"><path d="M.5 .5h7l-1 1H1.5v7h7v-5l1-1v7H.5z" fill="#888"/><path d="M5 7l4-4" stroke="#666"/></svg>
<div style="left:102px;top:455px;width:1px;height:16px;background:#ececec;"></div>
<div style="left:167px;top:457px;width:15px;height:14px;background:#fff;border:1px solid #adadad;border-radius:3px;box-sizing:border-box;"></div>
<span class="t" style="left:169.5px;top:458.05px;font-size:11px;font-weight:400;color:#000;transform:scaleX(0.9817);transform-origin:0 0;">...</span>
<div style="left:33px;top:471px;width:152px;height:1px;background:#ececec;"></div>
<svg style="left:20px;top:474px" width="11" height="11" viewBox="0 0 11 11"><path d="M2 10.3L5.5 1.2 9 10.3M3.3 7.3h4.4" fill="none" stroke="#f445f4" stroke-width="1.6"/></svg>
<span class="t" style="left:37.5px;top:473.89px;font-size:11.5px;font-weight:400;color:#000;transform:scaleX(0.9500);transform-origin:0 0;">Model...</span>
<svg style="left:88px;top:476px" width="10" height="10" viewBox="0 0 10 10"><path d="M.5 .5h7l-1 1H1.5v7h7v-5l1-1v7H.5z" fill="#888"/><path d="M5 7l4-4" stroke="#666"/></svg>
<div style="left:102px;top:472px;width:1px;height:16px;background:#ececec;"></div>
<div style="left:167px;top:474px;width:15px;height:14px;background:#fff;border:1px solid #adadad;border-radius:3px;box-sizing:border-box;"></div>
<span class="t" style="left:169.5px;top:475.05px;font-size:11px;font-weight:400;color:#000;transform:scaleX(0.9817);transform-origin:0 0;">...</span>
<div style="left:33px;top:488px;width:152px;height:1px;background:#ececec;"></div>
<svg style="left:20px;top:491px" width="11" height="11" viewBox="0 0 11 11"><path d="M2 10.3L5.5 1.2 9 10.3M3.3 7.3h4.4" fill="none" stroke="#f445f4" stroke-width="1.6"/></svg>
<span class="t" style="left:37.5px;top:490.89px;font-size:11.5px;font-weight:400;color:#000;transform:scaleX(0.9500);transform-origin:0 0;">Model...</span>
<svg style="left:87px;top:492px" width="11" height="11" viewBox="0 0 11 11"><path d="M5.5 .5l5 5-5 5-5-5z" fill="#fff" stroke="#666"/><path d="M5.5 2.5l3 3-3 3-3-3z" fill="#111"/></svg>
<div style="left:102px;top:489px;width:1px;height:16px;background:#ececec;"></div>
<div style="left:167px;top:491px;width:15px;height:14px;background:#fff;border:1px solid #adadad;border-radius:3px;box-sizing:border-box;"></div>
<span class="t" style="left:169.5px;top:492.05px;font-size:11px;font-weight:400;color:#000;transform:scaleX(0.9817);transform-origin:0 0;">...</span>
<span class="t" style="left:106px;top:490.89px;font-size:11.5px;font-weight:700;color:#000;transform:scaleX(1.1102);transform-origin:0 0;">WaterTr...</span>
<div style="left:33px;top:505px;width:152px;height:1px;background:#ececec;"></div>
<svg style="left:20px;top:508px" width="11" height="11" viewBox="0 0 11 11"><path d="M2 10.3L5.5 1.2 9 10.3M3.3 7.3h4.4" fill="none" stroke="#f445f4" stroke-width="1.6"/></svg>
<span class="t" style="left:37.5px;top:507.89px;font-size:11.5px;font-weight:400;color:#000;transform:scaleX(0.9500);transform-origin:0 0;">Name</span>
<svg style="left:87px;top:509px" width="11" height="11" viewBox="0 0 11 11"><path d="M5.5 .5l5 5-5 5-5-5z" fill="#fff" stroke="#666"/><path d="M5.5 2.5l3 3-3 3-3-3z" fill="#111"/></svg>
<div style="left:102px;top:506px;width:1px;height:16px;background:#ececec;"></div>
<span class="t" style="left:106px;top:507.89px;font-size:11.5px;font-weight:700;color:#000;transform:scaleX(1.0214);transform-origin:0 0;">WaterConfi...</span>
<div style="left:33px;top:522px;width:152px;height:1px;background:#ececec;"></div>
<svg style="left:20px;top:525px" width="11" height="11" viewBox="0 0 11 11"><path d="M2 10.3L5.5 1.2 9 10.3M3.3 7.3h4.4" fill="none" stroke="#f445f4" stroke-width="1.6"/></svg>
<span class="t" style="left:37.5px;top:524.89px;font-size:11.5px;font-weight:400;color:#000;transform:scaleX(0.9500);transform-origin:0 0;">PathC...</span>
<svg style="left:88px;top:527px" width="10" height="10" viewBox="0 0 10 10"><path d="M.5 .5h7l-1 1H1.5v7h7v-5l1-1v7H.5z" fill="#888"/><path d="M5 7l4-4" stroke="#666"/></svg>
<div style="left:102px;top:523px;width:1px;height:16px;background:#ececec;"></div>
<div style="left:192px;top:438px;width:2px;height:51px;background:#7a7a7a;"></div>
<div style="left:1px;top:544px;width:200px;height:1px;background:#cfcfcf;"></div>
<div style="left:1px;top:545px;width:200px;height:54px;background:#f0f0f0;"></div>
<div style="left:207px;top:83px;width:616px;height:515px;background:#fff;"></div>
<div style="left:207px;top:83px;width:616px;height:1px;background:#e3e3e3;"></div>
<div style="left:207px;top:83px;width:1px;height:515px;background:#e3e3e3;"></div>
<div style="left:822px;top:83px;width:1px;height:515px;background:#e3e3e3;"></div>
<div style="left:208px;top:84px;width:614px;height:22px;background:#f5f5f5;"></div>
<div style="left:208px;top:106px;width:614px;height:1px;background:#e3e3e3;"></div>
<div style="left:209px;top:85px;width:87px;height:22px;background:#ededed;border:1px solid #e0e0e0;border-bottom:none;box-sizing:border-box;"></div>
<svg style="left:213px;top:88px" width="16" height="16" viewBox="0 0 16 16"><defs><linearGradient id="gis" x1="0" y1="0" x2="1" y2="1"><stop offset="0" stop-color="#fff"/><stop offset=".6" stop-color="#f4f6fb"/><stop offset="1" stop-color="#c8d2e8"/></linearGradient></defs><rect x="1.5" y="1.5" width="13" height="12" fill="url(#gis)" stroke="#4a5a80"/><rect x="2" y="2" width="12" height="2" fill="#7a9ae0"/><circle cx="9.5" cy="3" r=".8" fill="#f0e040"/><circle cx="11.3" cy="3" r=".8" fill="#e02020"/><circle cx="13" cy="3" r=".8" fill="#f0e040"/></svg>
<span class="t" style="left:230px;top:90.59px;font-size:11.5px;font-weight:400;color:#000;transform:scaleX(0.9244);transform-origin:0 0;">InitialScreen</span>
<div style="left:296px;top:85px;width:161px;height:22px;background:#fff;border:1px solid #e0e0e0;border-bottom:none;box-sizing:border-box;"></div>
<svg style="left:300px;top:88px" width="16" height="16" viewBox="0 0 16 16"><path d="M11.5 1C12.5 4 15.5 6 15.5 9.5a4 4 0 0 1 -8 0C7.5 6 10.5 4 11.5 1z" fill="#a4dede" stroke="#1aa0a8" stroke-width=".9"/><polygon points="5.50,8.50 6.32,7.38 7.11,7.62 7.17,9.01 7.62,9.38 8.99,9.17 9.38,9.89 8.44,10.91 8.50,11.50 9.62,12.32 9.38,13.11 7.99,13.17 7.62,13.62 7.83,14.99 7.11,15.38 6.09,14.44 5.50,14.50 4.68,15.62 3.89,15.38 3.83,13.99 3.38,13.62 2.01,13.83 1.62,13.11 2.56,12.09 2.50,11.50 1.38,10.68 1.62,9.89 3.01,9.83 3.38,9.38 3.17,8.01 3.89,7.62 4.91,8.56" fill="#6f6fd6" stroke="#3a3a9a" stroke-width=".6"/><circle cx="5.5" cy="11.5" r="1.20" fill="#c8c8f0"/></svg>
<span class="t" style="left:320px;top:90.59px;font-size:11.5px;font-weight:700;color:#000;transform:scaleX(1.0253);transform-origin:0 0;">WaterConfiguration</span>
<div style="left:440px;top:90px;width:13px;height:13px;background:#c75050;"></div>
<svg style="left:440px;top:90px" width="13" height="13" viewBox="0 0 13 13"><path d="M4.3 4.8l4.4 4.4M8.7 4.8l-4.4 4.4" stroke="#fff" stroke-width="1.5"/></svg>
<svg style="left:787px;top:89px" width="10" height="11" viewBox="0 0 10 11"><path d="M7.5 1.5v8l-5-4z" fill="#fff" stroke="#444" stroke-width="1.3"/></svg>
<svg style="left:806px;top:89px" width="10" height="11" viewBox="0 0 10 11"><path d="M2.5 1.5v8l5-4z" fill="#fff" stroke="#444" stroke-width="1.3"/></svg>
<div style="left:340px;top:109px;width:24px;height:23px;background:#cce4f7;border:1px solid #99c9ef;border-radius:3px;box-sizing:border-box;"></div>
<div style="left:492px;top:109px;width:23px;height:23px;background:#cce4f7;border:1px solid #99c9ef;border-radius:3px;box-sizing:border-box;"></div>
<svg style="left:215px;top:113px" width="16" height="16" viewBox="0 0 16 16"><defs><linearGradient id="garr" x1="0" y1="0" x2="0" y2="1"><stop offset="0" stop-color="#e8e8e8"/><stop offset="1" stop-color="#b4b4b4"/></linearGradient></defs><path d="M2 8L8.5 1.5V5H15v6H8.5v3.5z" fill="url(#garr)" stroke="#a8a8a8" stroke-linejoin="round"/></svg>
<svg style="left:240px;top:113px" width="16" height="16" viewBox="0 0 16 16"><path d="M14 8L7.5 1.5V5H1v6h6.5v3.5z" fill="url(#garr)" stroke="#a8a8a8" stroke-linejoin="round"/></svg>
<svg style="left:264px;top:113px" width="16" height="16" viewBox="0 0 16 16"><path d="M8 .8L15.3 7.5h-2v8h-10.6v-8h-2z" fill="#f4f4f4" stroke="#8a8a8a" stroke-linejoin="round"/><path d="M6.5 15.5V11.5a1.5 1.5 0 0 1 3 0v4M6.5 5v3M9.5 5v3" fill="none" stroke="#8a8a8a"/></svg>
<div style="left:286px;top:111px;width:1px;height:20px;background:#8a8a8a;"></div>
<svg style="left:296px;top:113px" width="16" height="16" viewBox="0 0 16 16"><defs><linearGradient id="gptr" x1="0" y1="0" x2="1" y2="1"><stop offset="0" stop-color="#606060"/><stop offset="1" stop-color="#000"/></linearGradient></defs><path d="M4.5 1.5V12.8L7.2 10.3 9.3 14.6 11 13.8 8.9 9.6H12.6z" fill="url(#gptr)" stroke="#111" stroke-width=".6" stroke-linejoin="round"/></svg>
<svg style="left:320px;top:113px" width="16" height="16" viewBox="0 0 16 16"><rect x="4.5" y="1.5" width="10" height="7" fill="none" stroke="#1a3ab0" stroke-dasharray="1.2 1"/><path d="M1 10l3-3h3l1 2 1-1h3l2 3" fill="#7a7a7a"/><circle cx="4" cy="12" r="2.6" fill="#c8e4ff" stroke="#606060"/><circle cx="10" cy="12.8" r="2.6" fill="#c8e4ff" stroke="#606060"/></svg>
<svg style="left:344px;top:113px" width="16" height="16" viewBox="0 0 16 16"><text x="8.5" y="14.2" font-size="14" font-family="Liberation Serif" font-weight="700" text-anchor="middle" fill="#1a1a1a">A</text></svg>
<svg style="left:367px;top:113px" width="16" height="16" viewBox="0 0 16 16"><circle cx="7" cy="6.3" r="4.6" fill="#f8fbff" stroke="#1a2a60" stroke-width="1.5"/><path d="M5 5V4.3h.7M8.3 4.3H9V5M9 7.6v.7h-.7M5.7 8.3H5v-.7" fill="none" stroke="#1a2a60"/><path d="M10.3 9.6l3.5 3.5" stroke="#3a5aa0" stroke-width="2.4" stroke-linecap="round"/></svg>
<svg style="left:392px;top:113px" width="16" height="16" viewBox="0 0 16 16"><path d="M2.3 5.5V2.3h3.2M10.8 2.3H14v3.2M14 10.8V14h-3.2M5.5 14H2.3v-3.2" fill="none" stroke="#1a7ae0" stroke-width="1.2"/><circle cx="7.5" cy="7.2" r="3.2" fill="#e8f4ff" stroke="#1a2a60" stroke-width="1.1"/><path d="M9.8 9.6l2.4 2.4" stroke="#3a5aa0" stroke-width="1.8"/></svg>
<svg style="left:416px;top:113px" width="16" height="16" viewBox="0 0 16 16"><path d="M4.5 15c-1.5-2-3.5-4-3.5-5.5 0-1 1-1 2 0l1 1V4c0-1 1.6-1 1.6 0v4V2.5c0-1 1.6-1 1.6 0V8V3c0-1 1.6-1 1.6 0v5V4.5c0-1 1.6-1 1.6 0v6c0 2-1 3.5-2 4.5z" fill="#f4f6fa" stroke="#6a6a7a" stroke-width=".9"/></svg>
<svg style="left:440px;top:113px" width="16" height="16" viewBox="0 0 16 16"><rect x="3.5" y="3.5" width="11" height="11" fill="#eef4ff" stroke="#3a5ab0"/><path d="M5 7h8M5 9h8M5 11h8M5 13h5" stroke="#3a6ad0" stroke-width=".9"/><path d="M0 1.2h6M3 1.2v5" stroke="#1a2ad0" stroke-width="1.8"/><path d="M6 15.5l1-3 7-7 2 2-7 7z" fill="#f4b030" stroke="#7a5010" stroke-width=".7"/><path d="M6 15.5l1-3 2 2z" fill="#333"/></svg>
<div style="left:462px;top:111px;width:1px;height:20px;background:#8a8a8a;"></div>
<svg style="left:471px;top:113px" width="16" height="16" viewBox="0 0 16 16"><rect x="1.0" y="1.0" width="1" height="1" fill="#3a3a3a"/><rect x="1.0" y="4.2" width="1" height="1" fill="#3a3a3a"/><rect x="1.0" y="7.4" width="1" height="1" fill="#3a3a3a"/><rect x="1.0" y="10.6" width="1" height="1" fill="#3a3a3a"/><rect x="1.0" y="13.8" width="1" height="1" fill="#3a3a3a"/><rect x="3.8" y="1.0" width="1" height="1" fill="#3a3a3a"/><rect x="3.8" y="4.2" width="1" height="1" fill="#3a3a3a"/><rect x="3.8" y="7.4" width="1" height="1" fill="#3a3a3a"/><rect x="3.8" y="10.6" width="1" height="1" fill="#3a3a3a"/><rect x="3.8" y="13.8" width="1" height="1" fill="#3a3a3a"/><rect x="6.6" y="1.0" width="1" height="1" fill="#3a3a3a"/><rect x="6.6" y="4.2" width="1" height="1" fill="#3a3a3a"/><rect x="6.6" y="7.4" width="1" height="1" fill="#3a3a3a"/><rect x="6.6" y="10.6" width="1" height="1" fill="#3a3a3a"/><rect x="6.6" y="13.8" width="1" height="1" fill="#3a3a3a"/><rect x="9.4" y="1.0" width="1" height="1" fill="#3a3a3a"/><rect x="9.4" y="4.2" width="1" height="1" fill="#3a3a3a"/><rect x="9.4" y="7.4" width="1" height="1" fill="#3a3a3a"/><rect x="9.4" y="10.6" width="1" height="1" fill="#3a3a3a"/><rect x="9.4" y="13.8" width="1" height="1" fill="#3a3a3a"/><rect x="12.2" y="1.0" width="1" height="1" fill="#3a3a3a"/><rect x="12.2" y="4.2" width="1" height="1" fill="#3a3a3a"/><rect x="12.2" y="7.4" width="1" height="1" fill="#3a3a3a"/><rect x="12.2" y="10.6" width="1" height="1" fill="#3a3a3a"/><rect x="12.2" y="13.8" width="1" height="1" fill="#3a3a3a"/><rect x="15.0" y="1.0" width="1" height="1" fill="#3a3a3a"/><rect x="15.0" y="4.2" width="1" height="1" fill="#3a3a3a"/><rect x="15.0" y="7.4" width="1" height="1" fill="#3a3a3a"/><rect x="15.0" y="10.6" width="1" height="1" fill="#3a3a3a"/><rect x="15.0" y="13.8" width="1" height="1" fill="#3a3a3a"/></svg>
<svg style="left:496px;top:113px" width="16" height="16" viewBox="0 0 16 16"><rect x="1.0" y="1.0" width="1" height="1" fill="#3a3a3a"/><rect x="1.0" y="4.2" width="1" height="1" fill="#3a3a3a"/><rect x="1.0" y="7.4" width="1" height="1" fill="#3a3a3a"/><rect x="1.0" y="10.6" width="1" height="1" fill="#3a3a3a"/><rect x="1.0" y="13.8" width="1" height="1" fill="#3a3a3a"/><rect x="3.8" y="1.0" width="1" height="1" fill="#3a3a3a"/><rect x="3.8" y="4.2" width="1" height="1" fill="#3a3a3a"/><rect x="3.8" y="7.4" width="1" height="1" fill="#3a3a3a"/><rect x="3.8" y="10.6" width="1" height="1" fill="#3a3a3a"/><rect x="3.8" y="13.8" width="1" height="1" fill="#3a3a3a"/><rect x="6.6" y="1.0" width="1" height="1" fill="#3a3a3a"/><rect x="6.6" y="4.2" width="1" height="1" fill="#3a3a3a"/><rect x="6.6" y="7.4" width="1" height="1" fill="#3a3a3a"/><rect x="6.6" y="10.6" width="1" height="1" fill="#3a3a3a"/><rect x="6.6" y="13.8" width="1" height="1" fill="#3a3a3a"/><rect x="9.4" y="1.0" width="1" height="1" fill="#3a3a3a"/><rect x="9.4" y="4.2" width="1" height="1" fill="#3a3a3a"/><rect x="9.4" y="7.4" width="1" height="1" fill="#3a3a3a"/><rect x="9.4" y="10.6" width="1" height="1" fill="#3a3a3a"/><rect x="9.4" y="13.8" width="1" height="1" fill="#3a3a3a"/><rect x="12.2" y="1.0" width="1" height="1" fill="#3a3a3a"/><rect x="12.2" y="4.2" width="1" height="1" fill="#3a3a3a"/><rect x="12.2" y="7.4" width="1" height="1" fill="#3a3a3a"/><rect x="12.2" y="10.6" width="1" height="1" fill="#3a3a3a"/><rect x="12.2" y="13.8" width="1" height="1" fill="#3a3a3a"/><rect x="15.0" y="1.0" width="1" height="1" fill="#3a3a3a"/><rect x="15.0" y="4.2" width="1" height="1" fill="#3a3a3a"/><rect x="15.0" y="7.4" width="1" height="1" fill="#3a3a3a"/><rect x="15.0" y="10.6" width="1" height="1" fill="#3a3a3a"/><rect x="15.0" y="13.8" width="1" height="1" fill="#3a3a3a"/><path d="M9.5 9V5.5a3.2 3.2 0 0 1 6.4 0V9" fill="none" stroke="#d81818" stroke-width="2.4"/><path d="M8.3 9.2h2.4M14.7 9.2h2.4" stroke="#202020" stroke-width="1.6"/></svg>
<div style="left:518px;top:111px;width:1px;height:20px;background:#8a8a8a;"></div>
<svg style="left:528px;top:113px" width="16" height="16" viewBox="0 0 16 16"><path d="M2.5 2v11.5" stroke="#6a6a6a" stroke-width="1.4"/><rect x="4.5" y="2.5" width="5" height="2" fill="#fafafa" stroke="#8a8a8a"/><rect x="4.5" y="6.5" width="9" height="3" fill="#e4e4e4" stroke="#8a8a8a"/><path d="M5 12.5h6M5 12.5l1.5-1.5M5 12.5l1.5 1.5" fill="none" stroke="#6a6a6a"/></svg>
<svg style="left:552px;top:113px" width="16" height="16" viewBox="0 0 16 16"><path d="M14.5 2v11.5" stroke="#6a6a6a" stroke-width="1.4"/><rect x="7.5" y="2.5" width="5" height="2" fill="#fafafa" stroke="#8a8a8a"/><rect x="3.5" y="6.5" width="9" height="3" fill="#e4e4e4" stroke="#8a8a8a"/><path d="M12 12.5H6M12 12.5l-1.5-1.5M12 12.5l-1.5 1.5" fill="none" stroke="#6a6a6a"/></svg>
<svg style="left:576px;top:113px" width="16" height="16" viewBox="0 0 16 16"><path d="M2 2.5h12" stroke="#6a6a6a" stroke-width="1.4"/><rect x="2.5" y="4.5" width="2" height="5" fill="#fafafa" stroke="#8a8a8a"/><rect x="6.5" y="4.5" width="3" height="9" fill="#e4e4e4" stroke="#8a8a8a"/><path d="M12.5 12V5M12.5 5L11 6.5M12.5 5l1.5 1.5" fill="none" stroke="#6a6a6a"/></svg>
<svg style="left:600px;top:113px" width="16" height="16" viewBox="0 0 16 16"><path d="M1.5 13.5h12" stroke="#6a6a6a" stroke-width="1.4"/><rect x="2.5" y="6.5" width="2" height="5" fill="#fafafa" stroke="#8a8a8a"/><rect x="6.5" y="2.5" width="3" height="9" fill="#e4e4e4" stroke="#8a8a8a"/><path d="M12.5 4v7M12.5 11L11 9.5M12.5 11l1.5-1.5" fill="none" stroke="#6a6a6a"/></svg>
<svg style="left:624px;top:113px" width="16" height="16" viewBox="0 0 16 16"><path d="M8 2v12" stroke="#6a6a6a" stroke-width="1.4"/><rect x="5.5" y="4.5" width="5" height="2" fill="#fafafa" stroke="#8a8a8a"/><rect x="3.5" y="8.5" width="9" height="3" fill="#e4e4e4" stroke="#8a8a8a"/></svg>
<svg style="left:648px;top:113px" width="16" height="16" viewBox="0 0 16 16"><path d="M2 8h12" stroke="#6a6a6a" stroke-width="1.4"/><rect x="4.5" y="5.5" width="2" height="5" fill="#fafafa" stroke="#8a8a8a"/><rect x="8.5" y="3.5" width="3" height="9" fill="#e4e4e4" stroke="#8a8a8a"/></svg>
<svg style="left:672px;top:113px" width="16" height="16" viewBox="0 0 16 16"><rect x="1.0" y="1.0" width="1" height="1" fill="#9a9a9a"/><rect x="1.0" y="4.2" width="1" height="1" fill="#9a9a9a"/><rect x="1.0" y="7.4" width="1" height="1" fill="#9a9a9a"/><rect x="1.0" y="10.6" width="1" height="1" fill="#9a9a9a"/><rect x="1.0" y="13.8" width="1" height="1" fill="#9a9a9a"/><rect x="3.8" y="1.0" width="1" height="1" fill="#9a9a9a"/><rect x="3.8" y="4.2" width="1" height="1" fill="#9a9a9a"/><rect x="3.8" y="7.4" width="1" height="1" fill="#9a9a9a"/><rect x="3.8" y="10.6" width="1" height="1" fill="#9a9a9a"/><rect x="3.8" y="13.8" width="1" height="1" fill="#9a9a9a"/><rect x="6.6" y="1.0" width="1" height="1" fill="#9a9a9a"/><rect x="6.6" y="4.2" width="1" height="1" fill="#9a9a9a"/><rect x="6.6" y="7.4" width="1" height="1" fill="#9a9a9a"/><rect x="6.6" y="10.6" width="1" height="1" fill="#9a9a9a"/><rect x="6.6" y="13.8" width="1" height="1" fill="#9a9a9a"/><rect x="9.4" y="1.0" width="1" height="1" fill="#9a9a9a"/><rect x="9.4" y="4.2" width="1" height="1" fill="#9a9a9a"/><rect x="9.4" y="7.4" width="1" height="1" fill="#9a9a9a"/><rect x="9.4" y="10.6" width="1" height="1" fill="#9a9a9a"/><rect x="9.4" y="13.8" width="1" height="1" fill="#9a9a9a"/><rect x="12.2" y="1.0" width="1" height="1" fill="#9a9a9a"/><rect x="12.2" y="4.2" width="1" height="1" fill="#9a9a9a"/><rect x="12.2" y="7.4" width="1" height="1" fill="#9a9a9a"/><rect x="12.2" y="10.6" width="1" height="1" fill="#9a9a9a"/><rect x="12.2" y="13.8" width="1" height="1" fill="#9a9a9a"/><rect x="15.0" y="1.0" width="1" height="1" fill="#9a9a9a"/><rect x="15.0" y="4.2" width="1" height="1" fill="#9a9a9a"/><rect x="15.0" y="7.4" width="1" height="1" fill="#9a9a9a"/><rect x="15.0" y="10.6" width="1" height="1" fill="#9a9a9a"/><rect x="15.0" y="13.8" width="1" height="1" fill="#9a9a9a"/><path d="M1 6.5h4.5a3 3 0 0 1 3 3v4" fill="none" stroke="#3a3a3a" stroke-width="1.1"/><path d="M6.5 11.5l2 2.5 2-2.5" fill="none" stroke="#3a3a3a" stroke-width="1.1"/></svg>
<div style="left:694px;top:111px;width:1px;height:20px;background:#8a8a8a;"></div>
<svg style="left:704px;top:113px" width="16" height="16" viewBox="0 0 16 16"><path d="M4.5 7V5a3.5 3.5 0 0 1 7 0v2" fill="none" stroke="#8a8a8a" stroke-width="1.8"/><defs><linearGradient id="glock" x1="0" y1="0" x2="0" y2="1"><stop offset="0" stop-color="#fff4c8"/><stop offset="1" stop-color="#f0b030"/></linearGradient></defs><rect x="1.5" y="7.5" width="13" height="7" fill="url(#glock)" stroke="#c08010"/></svg>
<div style="left:726px;top:111px;width:1px;height:20px;background:#8a8a8a;"></div>
<svg style="left:736px;top:113px" width="16" height="16" viewBox="0 0 16 16"><circle cx="7.8" cy="7.3" r="7" fill="#7acfda" stroke="#26a6b6"/><path d="M7.8 2.8C8.8 5.5 10.6 7.2 10.6 9a2.8 2.8 0 0 1 -5.6 0C5 7.2 6.8 5.5 7.8 2.8z" fill="#2aa0b0" stroke="#106a7a" stroke-width=".8"/></svg>
<div style="left:213px;top:135px;width:565px;height:1px;background:#8a8a8a;"></div>
<svg style="left:216px;top:142px" width="16" height="16" viewBox="0 0 16 16"><path d="M3 12.5L12.5 3" stroke="#9a9a9a"/><rect x="1.5" y="11.5" width="2.5" height="2.5" fill="#e0e0e0" stroke="#8a8a8a" stroke-width=".8"/><rect x="11.5" y="1.5" width="2.5" height="2.5" fill="#e0e0e0" stroke="#8a8a8a" stroke-width=".8"/></svg>
<svg style="left:240px;top:142px" width="16" height="16" viewBox="0 0 16 16"><path d="M2.5 13.5L13.5 2.5" stroke="#9a9a9a"/><circle cx="2.8" cy="13.2" r="1" fill="#8a8a8a"/><circle cx="13.2" cy="2.8" r="1" fill="#8a8a8a"/></svg>
<svg style="left:264px;top:142px" width="16" height="16" viewBox="0 0 16 16"><circle cx="7.6" cy="9.5" r="3.3" fill="#f0f0f0" stroke="#9a9a9a"/><circle cx="7.6" cy="9.5" r="1" fill="#9a9a9a"/></svg>
<div style="left:286px;top:140px;width:1px;height:20px;background:#8a8a8a;"></div>
<svg style="left:296px;top:142px" width="16" height="16" viewBox="0 0 16 16"><path d="M1.5 8.5a6 5 0 0 1 6-5.5h7v3.5h-2.5a6 5 0 0 1 -10.5 2z" fill="#c8c8c8" stroke="#9a9a9a"/><path d="M7 6l2 2-2 2-2-2z" fill="#9a9a9a"/></svg>
<svg style="left:320px;top:142px" width="16" height="16" viewBox="0 0 16 16"><path d="M3.5 1.5h4l1.5 3.5a5 5 0 1 1 -5.5 2z" fill="#c8c8c8" stroke="#9a9a9a"/><path d="M2 15.5l2-3h7l2 3z" fill="#c8c8c8" stroke="#9a9a9a"/><path d="M7.5 8l2 2-2 2-2-2z" fill="#9a9a9a"/></svg>
<svg style="left:344px;top:142px" width="16" height="16" viewBox="0 0 16 16"><path d="M3.5 3.5v8.5h8.5V3.5" fill="#c8c8c8" stroke="#9a9a9a"/><path d="M.5 7.5h3M12 7.5h3.5M2.5 3.5h3M10 3.5h3" stroke="#9a9a9a"/></svg>
<svg style="left:368px;top:142px" width="16" height="16" viewBox="0 0 16 16"><path d="M1.5 1.5h11L8 9H6z" fill="#c8c8c8" stroke="#9a9a9a"/><path d="M7 9v6" stroke="#9a9a9a" stroke-width="1.2"/></svg>
<svg style="left:392px;top:142px" width="16" height="16" viewBox="0 0 16 16"><path d="M3.5 3.5v9.5h8V3.5" fill="#c8c8c8" stroke="#9a9a9a"/><path d="M2 3.5h2.5M10.5 3.5H14" stroke="#9a9a9a"/></svg>
<svg style="left:415px;top:142px" width="16" height="16" viewBox="0 0 16 16"><path d="M1 8.5h4M11 8.5h4M4.5 4.5v8l7-8v8" fill="none" stroke="#9a9a9a" stroke-width="1.1"/></svg>
<svg style="left:439px;top:142px" width="16" height="16" viewBox="0 0 16 16"><path d="M1 8.5h15" stroke="#9a9a9a"/><path d="M3 4.5l5 4-5 4z" fill="#9a9a9a"/><path d="M13 4.5l-5 4 5 4z" fill="#c8c8c8" stroke="#9a9a9a" stroke-width=".6"/><path d="M8 8.5V3M6 3h4" stroke="#9a9a9a"/><rect x="6" y="1" width="4" height="2" fill="#c8c8c8" stroke="#9a9a9a" stroke-width=".6"/></svg>
<svg style="left:463px;top:142px" width="16" height="16" viewBox="0 0 16 16"><path d="M1 8.5h15" stroke="#9a9a9a"/><path d="M3 4.5l5 4-5 4z" fill="#9a9a9a"/><path d="M13 4.5l-5 4 5 4z" fill="#c8c8c8" stroke="#9a9a9a" stroke-width=".6"/><path d="M8 8.5V1.5h5.5v5.5" fill="none" stroke="#9a9a9a"/></svg>
<svg style="left:487px;top:142px" width="16" height="16" viewBox="0 0 16 16"><path d="M1 8.5h15" stroke="#9a9a9a"/><path d="M3 4.5l5 4-5 4z" fill="#9a9a9a"/><path d="M13 4.5l-5 4 5 4z" fill="#c8c8c8" stroke="#9a9a9a" stroke-width=".6"/><path d="M8 8.5V1.5H1.5v5.5" fill="none" stroke="#9a9a9a"/></svg>
<svg style="left:511px;top:142px" width="16" height="16" viewBox="0 0 16 16"><path d="M1 8.5h15" stroke="#9a9a9a"/><path d="M3 4.5l5 4-5 4z" fill="#9a9a9a"/><path d="M13 4.5l-5 4 5 4z" fill="#c8c8c8" stroke="#9a9a9a" stroke-width=".6"/><path d="M8 8.5V2M5.5 2h5" stroke="#9a9a9a"/></svg>
<svg style="left:535px;top:142px" width="16" height="16" viewBox="0 0 16 16"><path d="M1 8.5h15" stroke="#9a9a9a"/><path d="M3 4.5l5 4-5 4z" fill="#9a9a9a"/><path d="M13 4.5l-5 4 5 4z" fill="#c8c8c8" stroke="#9a9a9a" stroke-width=".6"/></svg>
<svg style="left:559px;top:142px" width="16" height="16" viewBox="0 0 16 16"><path d="M1 8.5h15" stroke="#9a9a9a"/><path d="M3 4.5l5 4-5 4z" fill="#9a9a9a"/><path d="M13 4.5l-5 4 5 4z" fill="#c8c8c8" stroke="#9a9a9a" stroke-width=".6"/><path d="M8 8.5V4l2-2" fill="none" stroke="#9a9a9a"/><rect x="10.5" y=".5" width="3" height="3" fill="#f0f0f0" stroke="#9a9a9a"/></svg>
<svg style="left:584px;top:142px" width="16" height="16" viewBox="0 0 16 16"><path d="M7.7 1v3" stroke="#9a9a9a"/><circle cx="7.7" cy="8.5" r="4.5" fill="#c8c8c8" stroke="#9a9a9a"/><path d="M6.5 9.8l3-3M7.5 6.8h2v2" fill="none" stroke="#8a8a8a" stroke-width=".9"/></svg>
<svg style="left:607px;top:142px" width="16" height="16" viewBox="0 0 16 16"><path d="M1 8.5h3M11.5 8.5h3.5" stroke="#9a9a9a"/><circle cx="7.7" cy="8.5" r="4" fill="#c8c8c8" stroke="#9a9a9a"/><path d="M6.5 9.8l3-3M7.5 6.8h2v2" fill="none" stroke="#8a8a8a" stroke-width=".9"/></svg>
<svg style="left:632px;top:142px" width="16" height="16" viewBox="0 0 16 16"><path d="M8.5 1v3" stroke="#9a9a9a"/><circle cx="8.5" cy="9" r="5.5" fill="#c8c8c8" stroke="#9a9a9a"/><path d="M5.5 6.5v1.5M7.5 6.5v1.5M9.5 6.5v1.5M11.5 6.5v1.5" stroke="#8a8a8a" stroke-width=".8"/></svg>
<svg style="left:655px;top:142px" width="16" height="16" viewBox="0 0 16 16"><path d="M8 1v5M3.5 10V6.5h9V10M8 6.5V10" fill="none" stroke="#9a9a9a"/><circle cx="3.5" cy="12.5" r="2.3" fill="#c8c8c8" stroke="#9a9a9a"/><circle cx="8" cy="12.5" r="2.3" fill="#c8c8c8" stroke="#9a9a9a"/><circle cx="12.5" cy="12.5" r="2.3" fill="#c8c8c8" stroke="#9a9a9a"/></svg>
<svg style="left:680px;top:142px" width="16" height="16" viewBox="0 0 16 16"><path d="M1.5 2.5l3-2h7.5l2.5 2.5v11.5H4.5l-3-2.5z" fill="#d4d4d4" stroke="#8a8a8a"/><path d="M4.5 14.5V4.5h10M4.5 4.5l-3-2" fill="none" stroke="#8a8a8a"/></svg>
<div style="left:702px;top:140px;width:1px;height:20px;background:#8a8a8a;"></div>
<svg style="left:711px;top:142px" width="16" height="16" viewBox="0 0 16 16"><path d="M8 .7l7 6.3h-1.5v8.5H4V7H1.5z" fill="#d0d0d0" stroke="#9a9a9a" stroke-linejoin="round"/><path d="M9 6c1.5 2 2.5 3.3 2.5 4.8a2.5 2.5 0 0 1 -5 0C6.5 9.3 7.5 8 9 6z" fill="#d8d8d8" stroke="#8a8a8a"/><path d="M0 12.5h5M2.5 10v5" stroke="#b4b4b4" stroke-width="1.8"/></svg>
<svg style="left:735px;top:142px" width="16" height="16" viewBox="0 0 16 16"><path d="M8 .7l7 6.3h-1.5v8.5h-11V7H1z" fill="#d0d0d0" stroke="#9a9a9a" stroke-linejoin="round"/><path d="M9 6c1.5 2 2.5 3.3 2.5 4.8a2.5 2.5 0 0 1 -5 0C6.5 9.3 7.5 8 9 6z" fill="#d8d8d8" stroke="#8a8a8a"/><path d="M0 9h6" stroke="#a8a8a8" stroke-width="2"/><path d="M5 6.5l3 2.5-3 2.5z" fill="#a8a8a8"/></svg>
<svg style="left:759px;top:142px" width="16" height="16" viewBox="0 0 16 16"><path d="M8 .7l7 6.3h-1.5v8.5h-11V7H1z" fill="#d0d0d0" stroke="#9a9a9a" stroke-linejoin="round"/><path d="M9 6c1.5 2 2.5 3.3 2.5 4.8a2.5 2.5 0 0 1 -5 0C6.5 9.3 7.5 8 9 6z" fill="#d8d8d8" stroke="#8a8a8a"/><path d="M1.5 9H9" stroke="#8a8a8a" stroke-width="2"/><path d="M3 6.5L0 9l3 2.5z" fill="#8a8a8a"/></svg>
<div style="left:210px;top:163px;width:613px;height:435px;background:#fff;"></div>
<div style="left:210px;top:163px;width:610px;height:432px;background:#f3f3f3;border-left:1px solid #a0a0a0;border-top:1px solid #a0a0a0;box-sizing:border-box;"></div>
<div style="left:211px;top:164px;width:608px;height:430px;background:#f3f3f3;border-left:1px solid #696969;border-top:1px solid #696969;box-sizing:border-box;"></div>
<div style="left:212px;top:165px;width:607px;height:17px;background:#6e6e6e;"></div>
<div style="left:212px;top:165px;width:29px;height:17px;background:#9a9a9a;"></div>
<div style="left:790px;top:165px;width:29px;height:17px;background:#9a9a9a;"></div>
<span class="t" style="left:215px;top:168.04px;font-size:11px;font-weight:400;color:#f4f4f4;transform:scaleX(0.9816);transform-origin:0 0;">System</span>
<div style="left:241px;top:182px;width:549px;height:380px;background:#000;"></div>
<svg style="left:763px;top:271px" width="11" height="16" viewBox="0 0 11 16"><path d="M9 1.5v13L2 8z" fill="#404040" stroke="#8a8a8a"/></svg>
<div style="left:777px;top:188px;width:36px;height:179px;background:#9a9a9a;border-left:1px solid #fff;border-top:1px solid #fff;border-bottom:1px solid #fff;box-sizing:border-box;"></div>
<div style="left:778px;top:189px;width:12px;height:177px;background:#6e6e6e;"></div>
<div style="left:784px;top:195px;width:22px;height:22px;background:#f2f2f2;border:1px solid #c8c8c8;box-sizing:border-box;"></div>
<svg style="left:786px;top:197px" width="18" height="18" viewBox="0 0 18 18"><circle cx="7" cy="7" r="4.8" fill="none" stroke="#555" stroke-width="1.2"/><path d="M4.5 7h5M7 4.5v5" stroke="#333" stroke-width="1.3"/><path d="M10.5 10.5l4.5 4.5" stroke="#777" stroke-width="2"/></svg>
<div style="left:793px;top:227px;width:4px;height:97px;background:#d0d0d0;"></div>
<div style="left:785px;top:324px;width:20px;height:10px;background:#f2f2f2;border:1px solid #c8c8c8;box-sizing:border-box;"></div>
<div style="left:784px;top:339px;width:22px;height:22px;background:#f2f2f2;border:1px solid #c8c8c8;box-sizing:border-box;"></div>
<svg style="left:786px;top:341px" width="18" height="18" viewBox="0 0 18 18"><circle cx="7" cy="7" r="4.8" fill="none" stroke="#555" stroke-width="1.2"/><path d="M4.5 7h5" stroke="#333" stroke-width="1.5"/><path d="M10.5 10.5l4.5 4.5" stroke="#777" stroke-width="2"/></svg>
<div style="left:212px;top:562px;width:607px;height:15px;background:#6e6e6e;"></div>
<div style="left:212px;top:562px;width:29px;height:15px;background:#9a9a9a;"></div>
<div style="left:790px;top:562px;width:29px;height:15px;background:#9a9a9a;"></div>
<span class="t" style="left:215px;top:563.14px;font-size:12px;font-weight:400;color:#f0f0f0;transform:scaleX(0.9027);transform-origin:0 0;">X:155.000 Y:270.000</span>
<div style="left:212px;top:577px;width:607px;height:17px;background:#fff;"></div>
<svg style="left:212px;top:577px" width="607" height="17" viewBox="0 0 607 17"><rect x="74" y="0" width="410" height="16" fill="#f0f0f0"/><path d="M482 0L490 16H596L604 0z" fill="#fff"/><path d="M74 .5H482M604 .5H607" stroke="#000"/><path d="M94 16L102 0" stroke="#000"/><path d="M98.5 8L103 16" stroke="#000"/><path d="M146.5 16L154.5 0" stroke="#000"/><path d="M151.0 8L155.5 16" stroke="#000"/><path d="M207 16L215 0" stroke="#000"/><path d="M211.5 8L216 16" stroke="#000"/><path d="M282 16L290 0" stroke="#000"/><path d="M286.5 8L291 16" stroke="#000"/><path d="M333 16L341 0" stroke="#000"/><path d="M337.5 8L342 16" stroke="#000"/><path d="M383 16L391 0" stroke="#000"/><path d="M387.5 8L392 16" stroke="#000"/><path d="M74 15.5H94" stroke="#000"/><path d="M103 15.5H146.5" stroke="#000"/><path d="M155.5 15.5H207" stroke="#000"/><path d="M216 15.5H282" stroke="#000"/><path d="M291 15.5H333" stroke="#000"/><path d="M342 15.5H383" stroke="#000"/><path d="M392 15.5H480.70000000000005" stroke="#000"/><path d="M480.70000000000005 16L485 8" stroke="#000"/><path d="M482 0L490 16M490 15.5H596M596 16L604 0M600 8L605 16" stroke="#000" fill="none"/></svg>
<div style="left:286px;top:577px;width:14px;height:16px;overflow:hidden;"><span class="t" style="position:absolute;right:0;top:1.54px;font-size:11px;color:#000;transform:scaleX(0.95);transform-origin:100% 0;">Design</span></div>
<div style="left:212px;top:577px;width:74px;height:17px;background:#f0f0f0;"></div>
<svg style="left:212px;top:577px" width="74" height="17" viewBox="0 0 74 17"><path d="M4.5 6v7" stroke="#333" stroke-width="1.2"/><path d="M10 6v7L6 9.5z" fill="#333"/><path d="M27 6v7L23 9.5z" fill="#333"/><path d="M41.5 6v7L45.5 9.5z" fill="#333"/><path d="M58 6v7L62 9.5z" fill="#333"/><path d="M64.5 6v7" stroke="#333" stroke-width="1.2"/></svg>
<span class="t" style="left:318.6px;top:578.54px;font-size:11px;font-weight:400;color:#000;transform:scaleX(0.9459);transform-origin:0 0;">Analog</span>
<span class="t" style="left:371.3px;top:578.54px;font-size:11px;font-weight:400;color:#000;transform:scaleX(0.9593);transform-origin:0 0;">Discrete</span>
<span class="t" style="left:433.6px;top:578.54px;font-size:11px;font-weight:400;color:#000;transform:scaleX(0.9050);transform-origin:0 0;">Commands</span>
<span class="t" style="left:506px;top:578.54px;font-size:11px;font-weight:400;color:#000;transform:scaleX(0.9627);transform-origin:0 0;">Valves</span>
<span class="t" style="left:557px;top:578.54px;font-size:11px;font-weight:400;color:#000;transform:scaleX(0.9055);transform-origin:0 0;">Pumps</span>
<span class="t" style="left:612.4px;top:578.54px;font-size:11px;font-weight:400;color:#000;transform:scaleX(0.9567);transform-origin:0 0;">Measurements</span>
<span class="t" style="left:703.7px;top:578.54px;font-size:11px;font-weight:700;color:#000;transform:scaleX(1.0591);transform-origin:0 0;">Hydraulic Modeler</span>
<div style="left:201px;top:83px;width:6px;height:516px;background:#fff;"></div>
<div style="left:212px;top:594px;width:611px;height:2px;background:#fff;"></div>
<div style="left:207px;top:596px;width:616px;height:3px;background:#f0f0f0;"></div>
<div style="left:0px;top:599px;width:825px;height:1px;background:#d9d9d9;"></div>
<div style="left:0px;top:600px;width:825px;height:22px;background:#f0f0f0;"></div>
<span class="t" style="left:4.5px;top:604.59px;font-size:11.5px;font-weight:400;color:#000;transform:scaleX(0.9241);transform-origin:0 0;">For Help, press F1</span>
<div style="left:635px;top:601px;width:1px;height:19px;background:#d4d4d4;"></div>
<div style="left:780px;top:601px;width:1px;height:19px;background:#d4d4d4;"></div>
<div style="left:805px;top:601px;width:1px;height:19px;background:#d4d4d4;"></div>
<svg style="left:496px;top:602px" width="12" height="18" viewBox="0 0 12 18"><path d="M1 1v13l3.5-3 2.5 5.5 2-1-2.5-5H11z" fill="#111" stroke="#fff" stroke-width=".8"/></svg>
<svg style="left:639px;top:602px" width="16" height="16" viewBox="0 0 16 16"><rect x="5.5" y="5.5" width="9" height="9" fill="#a8a8a8" stroke="#505050" stroke-dasharray="1 1"/><path d="M1 4.5h8M5 1v9" stroke="#2a6ae0" stroke-width="1.2"/></svg>
<svg style="left:785px;top:602px" width="16" height="17" viewBox="0 0 16 17"><rect x="5.5" y="7.5" width="9" height="8" fill="#a8a8a8" stroke="#505050" stroke-dasharray="1 1"/><path d="M6 3.5h8M13.5 1.5v4" stroke="#2a6ae0" stroke-width="1.2"/><path d="M5.5 1.5v4" stroke="#505050"/><path d="M2.5 7v8M1 15.5h3M1 6.5h4" stroke="#2a6ae0" stroke-width="1.1"/></svg>
<svg style="left:812px;top:608px" width="12" height="12" viewBox="0 0 12 12"><rect x="8" y="2" width="2" height="2" fill="#bbb"/><rect x="5" y="5" width="2" height="2" fill="#bbb"/><rect x="8" y="5" width="2" height="2" fill="#bbb"/><rect x="2" y="8" width="2" height="2" fill="#bbb"/><rect x="5" y="8" width="2" height="2" fill="#bbb"/><rect x="8" y="8" width="2" height="2" fill="#bbb"/></svg>
<div style="left:0px;top:6px;width:1px;height:616px;background:#c4c4c4;"></div>
<div style="left:823px;top:0px;width:2px;height:622px;background:#cfcfcf;"></div>
<svg style="left:0px;top:0px" width="10" height="10" viewBox="0 0 10 10"><path d="M0 0h7A7 7 0 0 0 0 7z" fill="#000"/><path d="M7 .5A6.5 6.5 0 0 0 .5 7" fill="none" stroke="#c4c4c4"/></svg>
<svg style="left:815px;top:0px" width="10" height="10" viewBox="0 0 10 10"><path d="M10 0H3A7 7 0 0 1 10 7z" fill="#000"/></svg>
</body></html>
